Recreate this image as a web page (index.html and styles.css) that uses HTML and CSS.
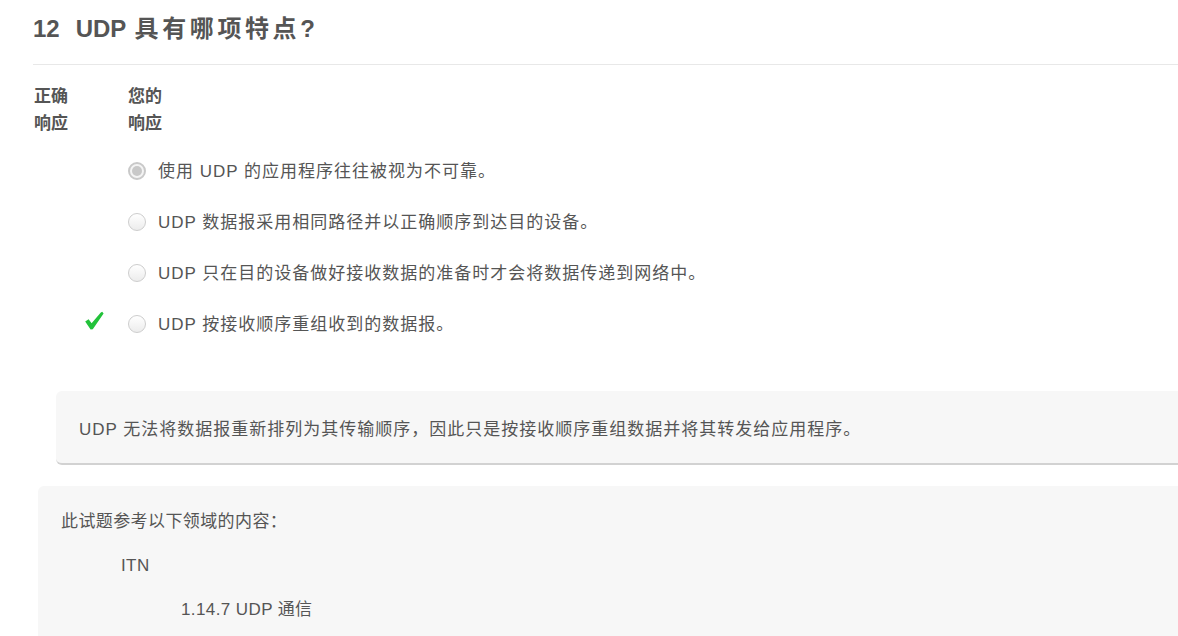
FILE: index.html
```html
<!DOCTYPE html>
<html lang="zh-CN">
<head>
  <meta charset="UTF-8" />
  <meta name="viewport" content="width=device-width, initial-scale=1.0" />
  <title>第 12 题</title>
  <link rel="stylesheet" href="styles.css">
</head>
<body>
  <div class="page">
    <div class="question-head">
      <h1><span class="q-num">12</span>UDP <span class="zh">具有哪项特点</span>?</h1>
    </div>

    <div class="col-labels">
      <div class="col-correct">正确<br>响应</div>
      <div class="col-yours">您的<br>响应</div>
    </div>

    <ul class="answers">
      <li>
        <span class="mark"></span>
        <span class="radio checked"></span>
        <span class="answer-text">使用 UDP 的应用程序往往被视为不可靠。</span>
      </li>
      <li>
        <span class="mark"></span>
        <span class="radio"></span>
        <span class="answer-text">UDP 数据报采用相同路径并以正确顺序到达目的设备。</span>
      </li>
      <li>
        <span class="mark"></span>
        <span class="radio"></span>
        <span class="answer-text">UDP 只在目的设备做好接收数据的准备时才会将数据传递到网络中。</span>
      </li>
      <li>
        <span class="mark">
          <svg width="20" height="20" viewBox="0 0 20 20">
            <path d="M1.2 10.4 L4.6 8.2 L7.6 12.2 L16.8 1.4 L18.2 0.8 L19.6 2.6 L8.8 18.2 L6.6 18.4 Z" fill="#22c23a"/>
          </svg>
        </span>
        <span class="radio"></span>
        <span class="answer-text">UDP 按接收顺序重组收到的数据报。</span>
      </li>
    </ul>

    <div class="feedback">
      UDP 无法将数据报重新排列为其传输顺序，因此只是按接收顺序重组数据并将其转发给应用程序。
    </div>

    <div class="reference">
      <p>此试题参考以下领域的内容：</p>
      <p class="lvl-1">ITN</p>
      <p class="lvl-2">1.14.7 UDP 通信</p>
    </div>
  </div>
</body>
</html>
```

FILE: styles.css
```css
* {
  box-sizing: border-box;
  margin: 0;
  padding: 0;
}
body {
  font-family: "Liberation Sans", Arial, "Noto Sans CJK SC", sans-serif;
  color: #555;
  background: #fff;
  overflow: hidden;
}
.page {
  width: 1220px;
  padding-left: 33px;
}
.question-head {
  padding-top: 14px;
  padding-bottom: 20px;
  border-bottom: 1px solid #e8e8e8;
}
h1 {
  font-size: 24px;
  line-height: 30px;
  font-weight: bold;
  color: #555;
}
h1 .zh {
  margin-left: 2px;
  letter-spacing: 3.6px;
}
.q-num {
  margin-right: 16px;
}
.col-labels {
  display: flex;
  margin-top: 18px;
  font-size: 17px;
  font-weight: bold;
  line-height: 27px;
  color: #555;
}
.col-correct {
  width: 95px;
  padding-left: 1px;
}
.answers {
  list-style: none;
  margin-top: 7px;
}
.answers li {
  display: flex;
  align-items: center;
  height: 51px;
}
.mark {
  width: 95px;
  padding-left: 51px;
  display: flex;
  align-items: center;
}
.mark svg {
  margin-top: -4px;
}
.radio {
  position: relative;
  width: 18px;
  height: 18px;
  border-radius: 50%;
  border: 1px solid #cdcdcd;
  background: linear-gradient(#ffffff, #ececec);
  margin-top: 2px;
}
.radio.checked {
  border: 2px solid #c9c9c9;
  background: #f4f4f4;
}
.radio.checked::after {
  content: "";
  position: absolute;
  left: 2px;
  top: 2px;
  width: 10px;
  height: 10px;
  border-radius: 50%;
  background: #c8c8c8;
}
.answer-text {
  margin-left: 12px;
  font-size: 17px;
  letter-spacing: 1px;
}
.feedback {
  margin-top: 43px;
  margin-left: 23px;
  height: 74px;
  padding-left: 23px;
  display: flex;
  align-items: center;
  font-size: 17px;
  letter-spacing: 1px;
  background: #f7f7f7;
  border-radius: 6px 0 0 6px;
  border-bottom: 2px solid #d2d2d2;
}
.reference {
  margin-top: 21px;
  margin-left: 5px;
  padding: 14px 0 40px 23px;
  background: #f7f7f7;
  border-radius: 6px 0 0 0;
  font-size: 17px;
  letter-spacing: 0.4px;
}
.reference p {
  line-height: 44px;
}
.reference .lvl-1 {
  padding-left: 60px;
}
.reference .lvl-2 {
  padding-left: 120px;
}
```
